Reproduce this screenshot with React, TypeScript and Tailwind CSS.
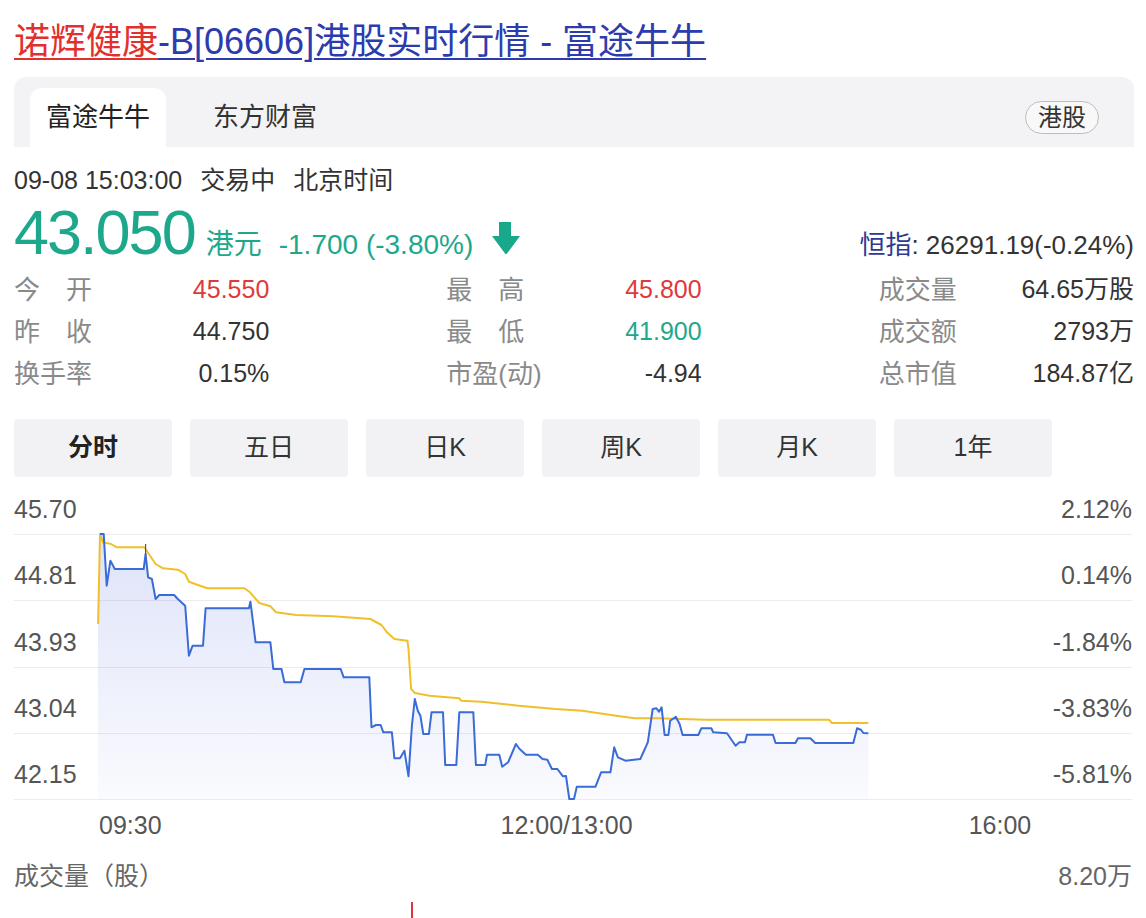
import React from "react"

const pricePts =
  "100,535 103.7,535 106.7,586.7 110.4,561.7 114.8,570 143.7,570 145.6,555 148.1,578.3 151.9,580 155.6,600 159.3,596 174.1,596 177.8,600 185.2,606.7 188.9,656.7 192.6,646.7 203,646.7 205.6,609.3 248.9,609.3 250.4,602.7 255.6,643.3 270.4,643.3 273.3,670 281.5,670 284.4,683.3 300.7,683.3 304.4,670 340.7,670 343.7,678.3 369.3,678.3 371.5,728.3 375.9,726 380.7,726 383.3,733.3 391.9,733.3 394.4,759.3 400,759.3 404.4,751.7 408.5,777.3 411.9,726.7 414.8,700 417.8,711.7 420.4,716.7 423.3,735 428.9,735 431.5,713.3 443,713.3 445.2,766 456.3,766 459.3,713.3 473.3,713.3 475.9,766 485.2,766 487,755.7 499.3,755.7 502.2,767.7 508.1,763.3 515.9,745 519.6,750 525.9,755.7 537.8,755.7 542.6,760 547.4,760.7 551.9,770 557.4,770 563,777.3 566,777 569.3,800 574,800 576.8,787.7 595.5,787.7 601.1,773.3 610.4,773.3 614.2,748.3 617.9,758.3 625.4,761.7 640.3,760 647.8,743.3 652.7,710 656.4,709.3 659,712.7 661.6,708.3 664.6,736 668.4,736 670.2,721.7 675.8,717.7 679.6,725 682.6,736 698.3,736 701.3,729.3 711.3,729.3 713.2,733.3 727,734.3 735.6,746.7 739.4,743.3 745,743.3 746.9,735.7 773,735.7 775.6,744 795.4,744 798,739.3 810.4,739.3 815.2,744 853.3,744 857.1,729.3 860.8,730.7 863.4,734 868.3,734.3"

const avgPts =
  "98.1,625 100,535 103,543.3 111.1,545 116.7,548.3 144.4,548.3 150,556.7 155.6,565 163,569.3 177.8,570.7 185.2,575 188.9,582.7 200,586.7 207.4,589.3 244.4,589.3 250,593.3 259.3,604 270.4,607.3 275.9,613.3 296.3,616 333.3,617.3 370.4,620 381.5,626 387,633.3 394.4,640 407.4,641.7 408.5,650 411.1,690 414.8,694 429.6,696.7 459.3,699.3 461.1,701.7 481.5,702.7 518.5,706.7 555.6,710 582.4,711.7 616,716.7 634.7,719.3 657.2,719.3 705.7,720.7 829,720.7 832,724 868.3,724"

const stats = [
  [
    { label: ["今", "开"], value: "45.550", color: "text-[#e0393a]" },
    { label: ["最", "高"], value: "45.800", color: "text-[#e0393a]" },
    { label: ["成交量"], value: "64.65万股", color: "text-[#333]" },
  ],
  [
    { label: ["昨", "收"], value: "44.750", color: "text-[#333]" },
    { label: ["最", "低"], value: "41.900", color: "text-[#1ea88b]" },
    { label: ["成交额"], value: "2793万", color: "text-[#333]" },
  ],
  [
    { label: ["换手率"], value: "0.15%", color: "text-[#333]" },
    { label: ["市盈(动)"], value: "-4.94", color: "text-[#333]" },
    { label: ["总市值"], value: "184.87亿", color: "text-[#333]" },
  ],
]

const periods = ["分时", "五日", "日K", "周K", "月K", "1年"]

const axisRows = [
  { left: "45.70", right: "2.12%", h: "h-[58px]" },
  { left: "44.81", right: "0.14%", h: "h-[66px]" },
  { left: "43.93", right: "-1.84%", h: "h-[67px]" },
  { left: "43.04", right: "-3.83%", h: "h-[66px]" },
  { left: "42.15", right: "-5.81%", h: "h-[66px]" },
]

function DownArrow() {
  return (
    <svg width="28" height="32" viewBox="0 0 28 32" className="mb-[-3px] ml-[19px]">
      <path d="M7 0h12v14h9L15 31.5q-1 1-2 0L0 14h7z" fill="#19a889" />
    </svg>
  )
}

function Chart() {
  return (
    <div className="relative">
      {axisRows.map((r) => (
        <div
          key={r.left}
          className={`${r.h} mr-[2px] flex items-end justify-between border-b border-[#ececec] pb-[12px] text-[25px] leading-[26px] text-[#555]`}
        >
          <span>{r.left}</span>
          <span>{r.right}</span>
        </div>
      ))}
      <svg
        className="pointer-events-none absolute inset-0"
        width="1120"
        height="323"
        viewBox="14 478 1120 323"
      >
        <defs>
          <linearGradient id="fill" x1="0" y1="0" x2="0" y2="1">
            <stop offset="0" stopColor="#5b72e0" stopOpacity="0.2" />
            <stop offset="1" stopColor="#5b72e0" stopOpacity="0.03" />
          </linearGradient>
        </defs>
        <polygon points={`98,800 98,625 ${pricePts} 868.3,800`} fill="url(#fill)" />
        <polyline points={avgPts} fill="none" stroke="#f0c02c" strokeWidth="2" strokeLinejoin="round" />
        <polyline points={pricePts} fill="none" stroke="#3b6bd6" strokeWidth="2" strokeLinejoin="round" />
        <line x1="145.6" y1="545" x2="145.6" y2="556" stroke="#555" strokeWidth="1.2" />
      </svg>
    </div>
  )
}

export default function App() {
  return (
    <div className="min-h-[918px] bg-white px-[12px] pt-[22px] font-['Liberation_Sans','Noto_Sans_CJK_SC',sans-serif] text-[#333]">
      {/* page title */}
      <h1 className="ml-[2px] text-[36px] leading-[40px] font-normal whitespace-nowrap">
        <span className="text-[#e2302e] underline decoration-[1.5px] underline-offset-[4px]">诺辉健康</span>
        <span className="text-[#2c3cae] underline decoration-[1.5px] underline-offset-[4px]">-B[06606]港股实时行情 - 富途牛牛</span>
      </h1>

      {/* source tabs */}
      <div className="mt-[15px] ml-[2px] flex h-[70px] items-end rounded-t-[12px] bg-[#f3f3f5] pl-[16px] pr-[35px]">
        <div className="flex h-[59px] items-center rounded-t-[12px] bg-white px-[16px] text-[26px] text-[#222]">富途牛牛</div>
        <div className="ml-[31px] flex h-[59px] items-center px-[16px] text-[26px] text-[#333]">东方财富</div>
        <div className="mb-[13px] ml-auto flex h-[33px] items-center rounded-full border border-[#bdbdbd] bg-[#f8f8f8] px-[12px] text-[24px] text-[#333]">
          港股
        </div>
      </div>

      <div className="ml-[2px]">
        {/* time line */}
        <div className="mt-[18px] flex gap-[18px] text-[25px] leading-[30px] text-[#333]">
          <span>09-08 15:03:00</span>
          <span>交易中</span>
          <span>北京时间</span>
        </div>

        {/* price */}
        <div className="mt-[6px] flex h-[62px] items-baseline text-[#1ea88b]">
          <span className="text-[63px] leading-[62px] tracking-[-2px]">43.050</span>
          <span className="ml-[11px] text-[28px]">港元</span>
          <span className="ml-[17px] text-[28px]">-1.700 (-3.80%)</span>
          <DownArrow />
          <span className="ml-auto text-[26px] text-[#333]">
            <span className="text-[#2d3a92]">恒指</span>: 26291.19(-0.24%)
          </span>
        </div>

        {/* stats */}
        <div className="mt-[6px]">
          {stats.map((row, i) => (
            <div key={i} className="grid h-[42px] grid-cols-3 items-center gap-x-[177px]">
              {row.map((s) => (
                <div key={s.value} className="flex items-center justify-between">
                  <span className="flex w-[78px] justify-between text-[26px] text-[#8a8a8a] whitespace-nowrap">
                    {s.label.map((l) => (
                      <span key={l}>{l}</span>
                    ))}
                  </span>
                  <span className={`text-[25px] ${s.color}`}>{s.value}</span>
                </div>
              ))}
            </div>
          ))}
        </div>

        {/* period buttons */}
        <div className="mt-[24px] flex gap-[18px]">
          {periods.map((p, i) => (
            <div
              key={p}
              className={`flex h-[58px] w-[158px] items-center justify-center rounded-[4px] bg-[#f2f2f4] text-[25px] ${
                i === 0 ? "font-bold text-[#222]" : "text-[#333]"
              }`}
            >
              {p}
            </div>
          ))}
        </div>

        <Chart />

        {/* time axis */}
        <div className="mt-[12px] flex text-[25px] leading-[26px] text-[#555]">
          <span className="ml-[85px]">09:30</span>
          <span className="ml-[339px]">12:00/13:00</span>
          <span className="ml-[336px]">16:00</span>
        </div>

        {/* volume */}
        <div className="mt-[25px] mr-[2px] flex justify-between text-[25px] leading-[26px] text-[#666]">
          <span>成交量（股）</span>
          <span>8.20万</span>
        </div>
        <div className="mt-[13px] ml-[397px] h-[16px] w-[2px] bg-[#d9363e]" />
      </div>
    </div>
  )
}
